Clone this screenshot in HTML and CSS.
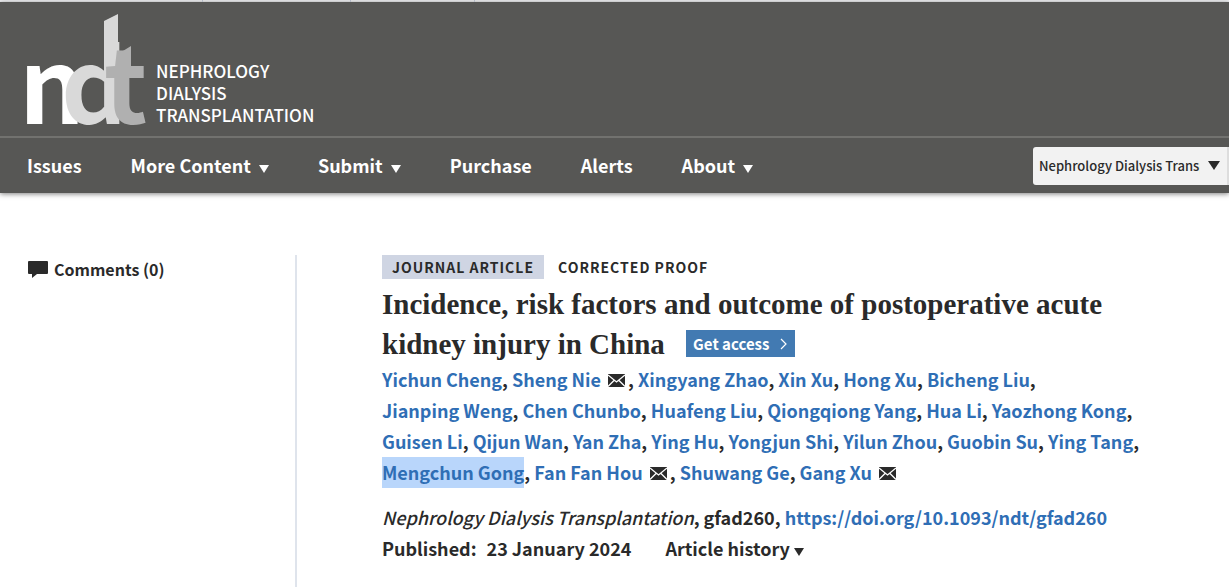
FILE: index.html
```html
<!DOCTYPE html>
<html lang="en">
<head>
    <meta charset="UTF-8">
    <meta name="viewport" content="width=device-width, initial-scale=1.0">
    <title>Incidence, risk factors and outcome of postoperative acute kidney injury in China</title>
    <link rel="stylesheet" href="styles.css">
</head>
<body>
    <svg class="sprite" aria-hidden="true">
        <symbol id="mail" viewBox="0 0 17 13">
            <rect width="17" height="13" fill="#2a2a2a"/>
            <path d="M0 1l8.500 7L17 1M0 12.500l6-6M17 12.500l-6-6" fill="none" stroke="#fff" stroke-width="1.300"/>
        </symbol>
    </svg>

    <div class="top-strip"><span></span><span></span><span></span></div>

    <header class="header">
        <a class="brand" href="#">
            <svg class="logo" viewBox="0 0 118 112" role="img" aria-label="ndt">
                <text class="logo-letter" x="-8" y="110" fill="#fff">n</text>
                <text class="logo-letter" x="34" y="110" fill="#d9d9d9">d</text>
                <path d="M77 7L91 0V60H77z" fill="#d9d9d9"/>
                <text class="logo-letter" x="77" y="110" fill="#b0b0b0">t</text>
                <path d="M91 40L104 32V60H91z" fill="#b0b0b0"/>
            </svg>
            <span class="brand-name">NEPHROLOGY<br>DIALYSIS<br>TRANSPLANTATION</span>
        </a>
        <nav class="nav">
            <ul class="menu">
                <li><a href="#">Issues</a></li>
                <li><a href="#">More Content <i class="caret"></i></a></li>
                <li><a href="#">Submit <i class="caret"></i></a></li>
                <li><a href="#">Purchase</a></li>
                <li><a href="#">Alerts</a></li>
                <li><a href="#">About <i class="caret"></i></a></li>
            </ul>
            <div class="search-scope">
                <select aria-label="Search in">
                    <option>Nephrology Dialysis Transplantation</option>
                </select>
                <i class="caret"></i>
            </div>
        </nav>
    </header>

    <main class="page">
        <aside class="sidebar">
            <a class="comments" href="#">
                <svg width="20" height="17" viewBox="0 0 20 17"><path d="M1 0h18q1 0 1 1v11q0 1-1 1H9l-5 4v-4H1q-1 0-1-1V1q0-1 1-1z" fill="#2a2a2a"/></svg>
                Comments (0)
            </a>
        </aside>
        <article class="article">
            <div class="labels">
                <span class="label-type">JOURNAL ARTICLE</span>
                <span>CORRECTED PROOF</span>
            </div>
            <h1>Incidence, risk factors and outcome of postoperative acute kidney injury in China
                <a class="access" href="#">Get access <svg width="8" height="12" viewBox="0 0 8 12"><path d="M1 1l5 5-5 5" fill="none" stroke="#fff" stroke-width="1.200"/></svg></a>
            </h1>
            <p class="authors">
                <a href="#">Yichun Cheng</a>, <a href="#">Sheng Nie</a> <svg class="mail"><use href="#mail"/></svg>, <a href="#">Xingyang Zhao</a>, <a href="#">Xin Xu</a>, <a href="#">Hong Xu</a>, <a href="#">Bicheng Liu</a>,
                <br><a href="#">Jianping Weng</a>, <a href="#">Chen Chunbo</a>, <a href="#">Huafeng Liu</a>, <a href="#">Qiongqiong Yang</a>, <a href="#">Hua Li</a>, <a href="#">Yaozhong Kong</a>,
                <br><a href="#">Guisen Li</a>, <a href="#">Qijun Wan</a>, <a href="#">Yan Zha</a>, <a href="#">Ying Hu</a>, <a href="#">Yongjun Shi</a>, <a href="#">Yilun Zhou</a>, <a href="#">Guobin Su</a>, <a href="#">Ying Tang</a>,
                <br><a class="selected" href="#">Mengchun Gong</a>, <a href="#">Fan Fan Hou</a> <svg class="mail"><use href="#mail"/></svg>, <a href="#">Shuwang Ge</a>, <a href="#">Gang Xu</a> <svg class="mail"><use href="#mail"/></svg>
            </p>
            <p class="citation"><em>Nephrology Dialysis Transplantation</em>, gfad260, <a href="#">https://doi.org/10.1093/ndt/gfad260</a></p>
            <div class="dates">
                <span>Published:</span>
                <span>23 January 2024</span>
                <button type="button" class="history">Article history <i class="caret"></i></button>
            </div>
        </article>
    </main>
</body>
</html>
```
FILE: styles.css
```css
* {
    box-sizing: border-box;
}

body {
    margin: 0;
    font-family: "Noto Sans CJK SC", "Open Sans", sans-serif;
    font-size: 18px;
    font-weight: 700;
    line-height: 31px;
    color: #2a2a2a;
    background: #fff;
}

a {
    color: #2f6eb5;
    text-decoration: none;
}

.sprite {
    display: none;
}

.top-strip {
    display: flex;
    height: 2px;
    padding-left: 55px;
    background: #f0f1f3;
}

.top-strip span {
    width: 148px;
    border-right: 1px solid #b4bac6;
}

.top-strip span:last-child {
    width: 124px;
}

.header {
    background: #575755;
    box-shadow: 0 1px 5px rgba(0, 0, 0, 0.5);
}

.brand {
    display: flex;
    align-items: flex-end;
    gap: 11px;
    padding: 12px 27px 10px;
    color: #fff;
}

.logo {
    display: block;
    width: 118px;
    height: 112px;
    overflow: visible;
}

.logo-letter {
    font-size: 103px;
    font-weight: 700;
}

.brand-name {
    font-size: 17px;
    font-weight: 500;
    line-height: 22px;
    color: #fff;
}

.nav {
    display: flex;
    align-items: center;
    justify-content: space-between;
    height: 57px;
    padding-left: 27px;
    border-top: 2px solid #72726f;
}

.menu {
    display: flex;
    gap: 49px;
    margin: 0;
    padding: 0;
    list-style: none;
}

.menu a {
    color: #fff;
    white-space: nowrap;
}

.caret {
    display: inline-block;
    margin-left: 4px;
    border: 5px solid transparent;
    border-top: 8px solid currentColor;
    border-bottom: 0;
}

.search-scope {
    display: flex;
    align-items: center;
    width: 196px;
    height: 38px;
    padding: 0 7px 0 6px;
    background: #f2f2f2;
    border-right: 2px solid #ddd;
    border-radius: 3px 0 0 3px;
}

.search-scope select {
    flex: 1;
    min-width: 0;
    padding: 0;
    border: 0;
    appearance: none;
    background: none;
    font: 500 13px/24px "Noto Sans CJK SC", sans-serif;
    color: #2a2a2a;
}

.search-scope .caret {
    margin-left: 8px;
    border-width: 9px 6px 0;
}

.page {
    display: flex;
    padding: 62px 27px 0;
}

.sidebar {
    flex: 0 0 270px;
    min-height: 340px;
    border-right: 2px solid #dfe4ec;
}

.comments {
    display: flex;
    align-items: center;
    gap: 6px;
    padding-left: 1px;
    font-size: 16px;
    line-height: 28px;
    color: #2a2a2a;
}

.article {
    flex: 1;
    max-width: 850px;
    padding-left: 85px;
}

.labels {
    display: flex;
    gap: 14px;
    font-size: 14px;
    line-height: 24px;
    letter-spacing: 1px;
}

.label-type {
    padding: 0 10px;
    background: #cfd5e3;
}

h1 {
    margin: 5px 0 0;
    font-family: "Liberation Serif", serif;
    font-size: 29px;
    font-weight: 700;
    line-height: 40px;
}

.access {
    display: inline-flex;
    align-items: center;
    gap: 11px;
    height: 27px;
    margin-left: 14px;
    padding: 0 7px;
    background: #427ab2;
    color: #fff;
    font-family: "Noto Sans CJK SC", sans-serif;
    font-size: 15px;
    line-height: 27px;
    vertical-align: 4px;
}

.authors {
    margin: 0;
}

.mail {
    width: 17px;
    height: 13px;
    margin: 0 3px;
}

.selected {
    display: inline-block;
    background: #b9d6fb;
}

.citation {
    margin: 14px 0 0;
}

.citation em {
    font-weight: 500;
}

.dates {
    display: flex;
    gap: 10px;
}

.history {
    margin-left: 24px;
    padding: 0;
    border: 0;
    background: none;
    font: inherit;
    color: inherit;
}

.history .caret {
    margin-left: 0;
}
```
